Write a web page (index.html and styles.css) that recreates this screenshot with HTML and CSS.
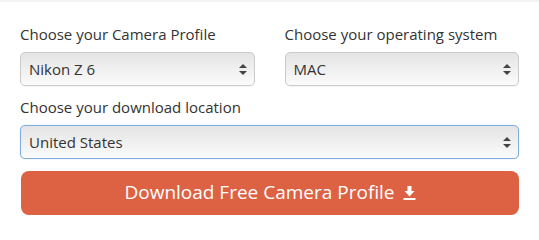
FILE: index.html
```html
<!DOCTYPE html>
<html lang="en">
<head>
  <meta charset="UTF-8">
  <title>Camera Profile Download</title>
  <link rel="stylesheet" href="styles.css">
</head>
<body>
  <div class="top-strip"></div>

  <form class="profile-form">
    <div class="form-row two-cols">
      <div class="field">
        <label for="camera">Choose your Camera Profile</label>
        <div class="select-wrap">
          <select id="camera">
            <option>Nikon Z 6</option>
            <option>Nikon Z 7</option>
          </select>
          <span class="select-arrows"></span>
        </div>
      </div>
      <div class="field">
        <label for="os">Choose your operating system</label>
        <div class="select-wrap">
          <select id="os">
            <option>MAC</option>
            <option>Windows</option>
          </select>
          <span class="select-arrows"></span>
        </div>
      </div>
    </div>

    <div class="form-row">
      <div class="field">
        <label for="location">Choose your download location</label>
        <div class="select-wrap">
          <select id="location" class="focused">
            <option>United States</option>
            <option>Europe</option>
          </select>
          <span class="select-arrows"></span>
        </div>
      </div>
    </div>

    <button type="button" class="download-btn">
      Download Free Camera Profile
      <svg class="dl-icon" width="13" height="14" viewBox="0 0 13 14">
        <path d="M4.5 0h4v5h3l-5 5.5-5-5.5h3z" fill="#fff"/>
        <rect x="0.5" y="12" width="12" height="2" fill="#fff"/>
      </svg>
    </button>
  </form>
</body>
</html>
```

FILE: styles.css
```css
body {
  margin: 0;
  font-family: "Open Sans", "Liberation Sans", sans-serif;
  color: #333;
  background-color: #fff;
}
.top-strip {
  height: 2px;
  background-color: #f3f3f3;
}
.profile-form {
  width: 499px;
  margin: 22px 0 0 20px;
}
.form-row {
  margin-bottom: 11px;
}
.two-cols {
  display: grid;
  grid-template-columns: 1fr 1fr;
  gap: 30px;
}
.field label {
  display: block;
  font-size: 15px;
  line-height: 20px;
  margin-bottom: 8px;
}
.select-wrap {
  position: relative;
}
.select-wrap select {
  display: block;
  width: 100%;
  height: 34px;
  padding: 0 28px 0 8px;
  font-family: inherit;
  font-size: 15px;
  color: #333;
  border: 1px solid #cbcbcb;
  border-radius: 5px;
  background: linear-gradient(#e4e4e4, #fbfbfb);
  box-shadow: 0 1px 1px rgba(0, 0, 0, 0.04);
  appearance: none;
  -webkit-appearance: none;
  outline: none;
}
.select-wrap select.focused {
  border-color: #7eaee0;
  box-shadow: 0 0 1px #9cc3ea;
}
.select-arrows {
  position: absolute;
  right: 8px;
  top: 12px;
  width: 8px;
  height: 11px;
  pointer-events: none;
}
.select-arrows::before,
.select-arrows::after {
  content: "";
  position: absolute;
  left: 0;
  border-left: 4px solid transparent;
  border-right: 4px solid transparent;
}
.select-arrows::before {
  top: 0;
  border-bottom: 4px solid #444;
}
.select-arrows::after {
  bottom: 0;
  border-top: 4px solid #444;
}
.download-btn {
  display: flex;
  align-items: center;
  justify-content: center;
  gap: 8px;
  width: 498px;
  height: 44px;
  margin: 12px 0 0 1px;
  padding: 0 0 2px 0;
  font-family: inherit;
  font-size: 19px;
  color: #fff;
  background-color: #dd6244;
  border: none;
  border-radius: 8px;
  cursor: pointer;
}
.dl-icon {
  margin-top: 1px;
}
```
